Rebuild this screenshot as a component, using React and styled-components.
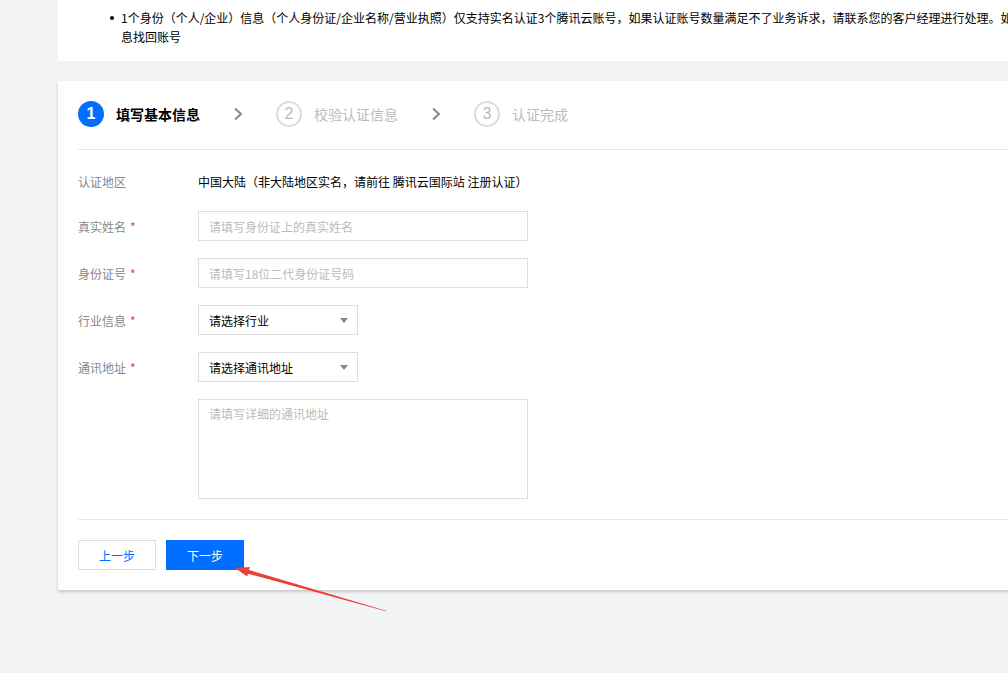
import React from "react";
import styled, { createGlobalStyle } from "styled-components";

const GlobalStyle = createGlobalStyle`
  html, body {
    margin: 0;
    padding: 0;
    overflow: hidden;
    background: #f2f3f5;
  }
  body {
    font-family: "Noto Sans CJK SC", "Liberation Sans", sans-serif;
    font-size: 12px;
    color: #000;
  }
`;

const Page = styled.div`
  position: relative;
  width: 1300px;
  height: 673px;
  padding-left: 58px;
  box-sizing: border-box;
`;

const NoticeCard = styled.div`
  width: 1150px;
  background: #fff;
  padding: 8px 0 15px 52px;
  box-sizing: border-box;
`;

const NoticeItem = styled.div`
  display: flex;
  align-items: flex-start;
  width: 1050px;
  line-height: 19px;
  color: #000;
`;

const Dot = styled.span`
  flex: none;
  width: 4px;
  height: 4px;
  border-radius: 50%;
  background: #000;
  margin: 8px 7px 0 0;
`;

const MainCard = styled.div`
  width: 1150px;
  margin-top: 20px;
  background: #fff;
  padding: 19px 20px 20px 20px;
  box-sizing: border-box;
  box-shadow: 0 2px 3px rgba(0, 0, 0, 0.18);
`;

const Steps = styled.div`
  display: flex;
  align-items: center;
  height: 28px;
  padding-bottom: 21px;
  border-bottom: 1px solid #e5e5e5;
`;

const Step = styled.div`
  display: flex;
  align-items: center;
  gap: 12px;
`;

const StepNum = styled.span`
  width: 26px;
  height: 26px;
  box-sizing: border-box;
  border-radius: 50%;
  display: flex;
  align-items: center;
  justify-content: center;
  font-family: "Liberation Sans", sans-serif;
  font-size: 16px;
  font-weight: ${(p) => (p.$active ? 700 : 400)};
  color: ${(p) => (p.$active ? "#fff" : "#bbb")};
  background: ${(p) => (p.$active ? "#006eff" : "#fff")};
  border: ${(p) => (p.$active ? "none" : "2px solid #ddd")};
`;

const StepLabel = styled.span`
  font-size: 14px;
  font-weight: ${(p) => (p.$active ? 700 : 400)};
  color: ${(p) => (p.$active ? "#000" : "#bbb")};
`;

const Chevron = styled.svg`
  width: 10px;
  height: 14px;
  margin: 0 33px 0 33px;
`;

const Form = styled.div`
  padding-top: 16px;
  padding-bottom: 20px;
  border-bottom: 1px solid #e5e5e5;
  display: flex;
  flex-direction: column;
  gap: 17px;
`;

const Row = styled.div`
  display: flex;
  align-items: ${(p) => (p.$top ? "flex-start" : "center")};
  min-height: 30px;
  margin-bottom: ${(p) => (p.$tight ? "-2px" : "0")};
`;

const Label = styled.div`
  width: 120px;
  flex: none;
  color: #888;
`;

const Star = styled.span`
  color: #e54545;
  margin-left: 4px;
`;

const Value = styled.div`
  color: #000;
`;

const TextInput = styled.div`
  width: 330px;
  height: 30px;
  box-sizing: border-box;
  border: 1px solid #ddd;
  padding: 0 10px;
  display: flex;
  align-items: center;
  color: #bbb;
`;

const Select = styled.div`
  width: 160px;
  height: 30px;
  box-sizing: border-box;
  border: 1px solid #ddd;
  padding: 0 9px 0 10px;
  display: flex;
  align-items: center;
  justify-content: space-between;
  color: #000;
`;

const Caret = styled.span`
  width: 0;
  height: 0;
  border-left: 4px solid transparent;
  border-right: 4px solid transparent;
  border-top: 5px solid #888;
`;

const TextArea = styled.div`
  width: 330px;
  height: 100px;
  box-sizing: border-box;
  border: 1px solid #ddd;
  padding: 5px 10px;
  color: #bbb;
`;

const Actions = styled.div`
  display: flex;
  gap: 10px;
  padding-top: 20px;
`;

const Button = styled.div`
  width: 78px;
  height: 30px;
  box-sizing: border-box;
  display: flex;
  align-items: center;
  justify-content: center;
  background: ${(p) => (p.$primary ? "#006eff" : "#fff")};
  color: ${(p) => (p.$primary ? "#fff" : "#006eff")};
  border: ${(p) => (p.$primary ? "none" : "1px solid #ddd")};
`;

const Arrow = styled.svg`
  position: absolute;
  left: 220px;
  top: 560px;
  width: 180px;
  height: 60px;
`;

function ChevronIcon() {
  return (
    <Chevron viewBox="0 0 10 14">
      <polyline points="2,1.5 8,7 2,12.5" fill="none" stroke="#888" strokeWidth="2" />
    </Chevron>
  );
}

const steps = [
  { n: 1, label: "填写基本信息", active: true },
  { n: 2, label: "校验认证信息" },
  { n: 3, label: "认证完成" },
];

export default function App() {
  return (
    <Page>
      <GlobalStyle />
      <NoticeCard>
        <NoticeItem>
          <Dot />
          <span>
            1个身份（个人/企业）信息（个人身份证/企业名称/营业执照）仅支持实名认证3个腾讯云账号，如果认证账号数量满足不了业务诉求，请联系您的客户经理进行处理。如需找回账号，请通过身份信息找回账号
          </span>
        </NoticeItem>
      </NoticeCard>

      <MainCard>
        <Steps>
          {steps.map((s, i) => (
            <React.Fragment key={s.n}>
              {i > 0 && <ChevronIcon />}
              <Step>
                <StepNum $active={s.active}>{s.n}</StepNum>
                <StepLabel $active={s.active}>{s.label}</StepLabel>
              </Step>
            </React.Fragment>
          ))}
        </Steps>

        <Form>
          <Row $tight>
            <Label>认证地区</Label>
            <Value>中国大陆（非大陆地区实名，请前往 腾讯云国际站 注册认证）</Value>
          </Row>
          <Row>
            <Label>
              真实姓名<Star>*</Star>
            </Label>
            <TextInput>请填写身份证上的真实姓名</TextInput>
          </Row>
          <Row>
            <Label>
              身份证号<Star>*</Star>
            </Label>
            <TextInput>请填写18位二代身份证号码</TextInput>
          </Row>
          <Row>
            <Label>
              行业信息<Star>*</Star>
            </Label>
            <Select>
              请选择行业
              <Caret />
            </Select>
          </Row>
          <Row>
            <Label>
              通讯地址<Star>*</Star>
            </Label>
            <Select>
              请选择通讯地址
              <Caret />
            </Select>
          </Row>
          <Row $top>
            <Label />
            <TextArea>请填写详细的通讯地址</TextArea>
          </Row>
        </Form>

        <Actions>
          <Button>上一步</Button>
          <Button $primary>下一步</Button>
        </Actions>
      </MainCard>

      <Arrow viewBox="0 0 180 60">
        <polygon
          points="15,8 27.1,16.6 28,13.7 165.9,51.3 166.1,50.7 29,9.9 29.9,7"
          fill="#e8403a"
        />
      </Arrow>
    </Page>
  );
}
